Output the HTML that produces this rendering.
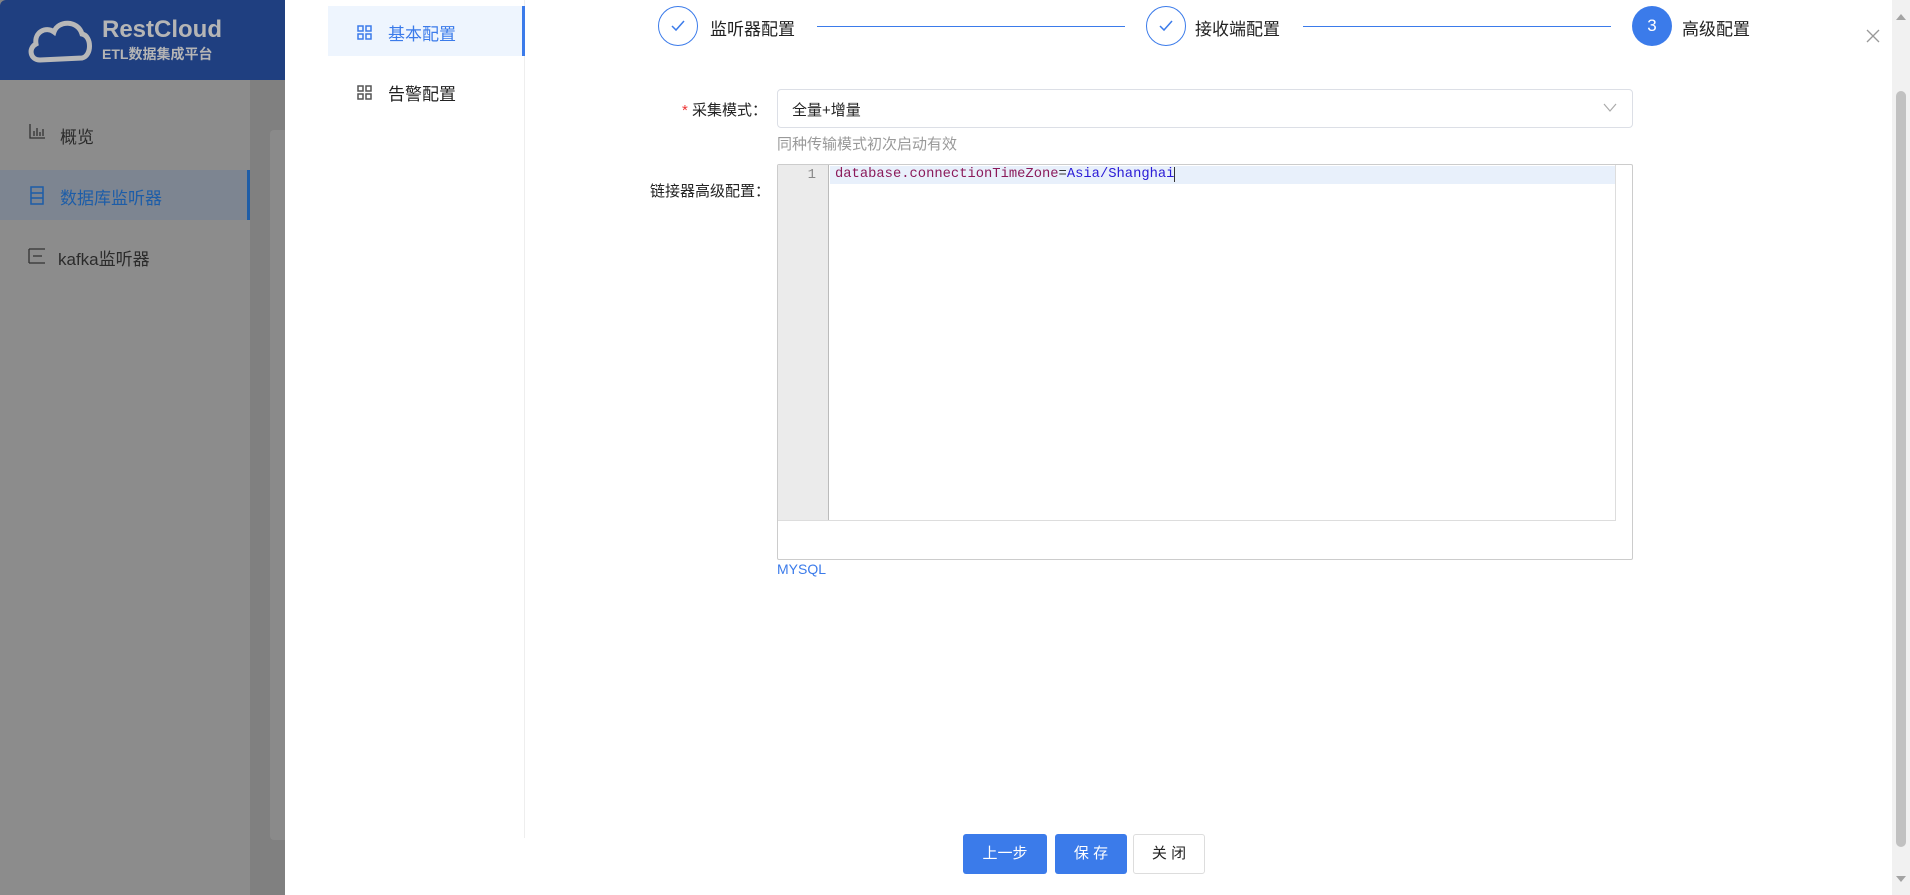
<!DOCTYPE html>
<html><head><meta charset="utf-8"><style>
*{box-sizing:border-box;margin:0;padding:0}
body{width:1910px;height:895px;overflow:hidden;position:relative;font-family:"Liberation Sans","Noto Sans CJK SC",sans-serif;background:#fff}
.abs{position:absolute}
</style></head><body>
<div class="abs" style="left:0;top:0;width:285px;height:895px;background:#858585"></div>
<div class="abs" style="left:0;top:0;width:285px;height:80px;background:#1f3f80;border-top-left-radius:6px"></div>
<svg class="abs" style="left:26px;top:16px" width="70" height="48" viewBox="0 0 70 48"><path d="M14 44 C4 44 2 32 10 28 C8 16 20 10 28 16 C32 4 52 4 56 18 C66 20 66 40 56 42 Z" fill="none" stroke="#b8b8b8" stroke-width="5"/></svg>
<div class="abs" style="left:102px;top:16px;color:#b5b5b5;font-size:24px;font-weight:bold">RestCloud</div>
<div class="abs" style="left:102px;top:44px;color:#b5b5b5;font-size:14px;font-weight:bold">ETL数据集成平台</div>
<div class="abs" style="left:0;top:80px;width:250px;height:815px;background:#8c8c8c"></div>
<div class="abs" style="left:250px;top:80px;width:35px;height:815px;background:#808080"></div>
<div class="abs" style="left:270px;top:130px;width:15px;height:710px;background:#8a8a8a;border-radius:4px 0 0 4px"></div>
<svg class="abs" style="left:29px;top:124px" width="16" height="15"><path d="M1 0 V14 H16 M5 12 V7 M8 12 V4 M11 12 V8 M14 12 V5" fill="none" stroke="#333" stroke-width="1.3"/></svg>
<div class="abs" style="left:60px;top:123px;font-size:17px;color:#2b2b2b">概览</div>
<div class="abs" style="left:0;top:170px;width:250px;height:50px;background:#7d8591;border-right:3px solid #1d5da8"></div>
<svg class="abs" style="left:30px;top:186px" width="14" height="19"><path d="M1 1 H13 V18 H1 Z M1 7 H13 M1 12 H13" fill="none" stroke="#1d5da8" stroke-width="1.5"/></svg>
<div class="abs" style="left:60px;top:184px;font-size:17px;color:#1d5da8">数据库监听器</div>
<svg class="abs" style="left:28px;top:248px" width="18" height="16"><path d="M1 1 H17 M1 15 H17 M1 1 V15 M5 8 H14" fill="none" stroke="#333" stroke-width="1.3"/></svg>
<div class="abs" style="left:58px;top:245px;font-size:17px;color:#2b2b2b">kafka监听器</div>

<div class="abs" style="left:285px;top:0;width:1625px;height:895px;background:#fff"></div>
<div class="abs" style="left:524px;top:0;width:1px;height:838px;background:#eee"></div>
<div class="abs" style="left:328px;top:6px;width:197px;height:50px;background:#eef5fe;border-right:3px solid #3b7bea"></div>
<svg class="abs" style="left:357px;top:25px" width="15" height="15"><g fill="none" stroke="#3b7bea" stroke-width="1.5"><rect x="1" y="1" width="5" height="5"/><rect x="9" y="1" width="5" height="5"/><rect x="1" y="9" width="5" height="5"/><rect x="9" y="9" width="5" height="5"/></g></svg>
<div class="abs" style="left:388px;top:20px;font-size:17px;color:#3b7bea">基本配置</div>
<svg class="abs" style="left:357px;top:85px" width="15" height="15"><g fill="none" stroke="#555" stroke-width="1.5"><rect x="1" y="1" width="5" height="5"/><rect x="9" y="1" width="5" height="5"/><rect x="1" y="9" width="5" height="5"/><rect x="9" y="9" width="5" height="5"/></g></svg>
<div class="abs" style="left:388px;top:80px;font-size:17px;color:#222">告警配置</div>

<div class="abs" style="left:658px;top:6px;width:40px;height:40px;border:1px solid #3b7bea;border-radius:50%"></div>
<svg class="abs" style="left:670px;top:18px" width="16" height="16"><path d="M2 8 L6 12 L14 3" fill="none" stroke="#3b7bea" stroke-width="1.5"/></svg>
<div class="abs" style="left:710px;top:15px;font-size:17px;color:#222">监听器配置</div>
<div class="abs" style="left:817px;top:26px;width:308px;height:1px;background:#3b7bea"></div>
<div class="abs" style="left:1146px;top:6px;width:40px;height:40px;border:1px solid #3b7bea;border-radius:50%"></div>
<svg class="abs" style="left:1158px;top:18px" width="16" height="16"><path d="M2 8 L6 12 L14 3" fill="none" stroke="#3b7bea" stroke-width="1.5"/></svg>
<div class="abs" style="left:1195px;top:15px;font-size:17px;color:#222">接收端配置</div>
<div class="abs" style="left:1303px;top:26px;width:308px;height:1px;background:#3b7bea"></div>
<div class="abs" style="left:1632px;top:6px;width:40px;height:40px;background:#3b7bea;border-radius:50%;color:#fff;font-size:17px;text-align:center;line-height:40px">3</div>
<div class="abs" style="left:1682px;top:15px;font-size:17px;color:#222">高级配置</div>
<svg class="abs" style="left:1866px;top:29px" width="14" height="14"><path d="M1 1 L13 13 M13 1 L1 13" stroke="#999" stroke-width="1.3"/></svg>

<div class="abs" style="left:1892px;top:0;width:18px;height:895px;background:#f1f1f1"></div>
<div class="abs" style="left:1896px;top:91px;width:10px;height:756px;background:#c1c1c1;border-radius:5px"></div>
<div class="abs" style="left:1896px;top:14px;width:0;height:0;border-left:5px solid transparent;border-right:5px solid transparent;border-bottom:6px solid #a3a3a3"></div>
<div class="abs" style="left:1896px;top:876px;width:0;height:0;border-left:5px solid transparent;border-right:5px solid transparent;border-top:6px solid #a3a3a3"></div>

<div class="abs" style="left:600px;top:99px;width:167px;text-align:right;font-size:15px;color:#222"><span style="color:#e33">*</span> 采集模式：</div>
<div class="abs" style="left:777px;top:89px;width:856px;height:39px;border:1px solid #dcdfe6;border-radius:4px"></div>
<div class="abs" style="left:792px;top:99px;font-size:15px;color:#222">全量+增量</div>
<svg class="abs" style="left:1603px;top:103px" width="14" height="10"><path d="M1 1 L7 8 L13 1" fill="none" stroke="#aaa" stroke-width="1.2"/></svg>
<div class="abs" style="left:777px;top:133px;font-size:15px;color:#999">同种传输模式初次启动有效</div>
<div class="abs" style="left:600px;top:180px;width:170px;text-align:right;font-size:15px;color:#222">链接器高级配置：</div>
<div class="abs" style="left:777px;top:164px;width:856px;height:396px;border:1px solid #ccc;border-radius:2px"></div>
<div class="abs" style="left:778px;top:165px;width:51px;height:355px;background:#ebebeb;border-right:1px solid #bbb"></div>
<div class="abs" style="left:778px;top:520px;width:837px;height:1px;background:#ddd"></div>
<div class="abs" style="left:1615px;top:165px;width:1px;height:356px;background:#ddd"></div>
<div class="abs" style="left:830px;top:166px;width:785px;height:18px;background:#e8f0fb"></div>
<div class="abs" style="left:778px;top:166px;width:38px;text-align:right;font-family:'Liberation Mono',monospace;font-size:14px;color:#888;line-height:18px">1</div>
<div class="abs" style="left:835px;top:166px;font-family:'Liberation Mono',monospace;font-size:13.8px;line-height:18px;white-space:pre"><span style="color:#8b1a5b">database.connectionTimeZone</span><span style="color:#333">=</span><span style="color:#2a1bd6">Asia/Shanghai</span><span style="border-left:1px solid #333"></span></div>
<div class="abs" style="left:777px;top:561px;font-size:14px;color:#3b7bea">MYSQL</div>

<div class="abs" style="left:963px;top:834px;width:84px;height:40px;background:#3b7bea;border-radius:3px;color:#fff;font-size:15px;text-align:center;line-height:40px">上一步</div>
<div class="abs" style="left:1055px;top:834px;width:72px;height:40px;background:#3b7bea;border-radius:3px;color:#fff;font-size:15px;text-align:center;line-height:40px">保 存</div>
<div class="abs" style="left:1133px;top:834px;width:72px;height:40px;background:#fff;border:1px solid #ddd;border-radius:3px;color:#222;font-size:15px;text-align:center;line-height:38px">关 闭</div>
</body></html>
